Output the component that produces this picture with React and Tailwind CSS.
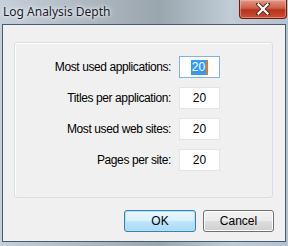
const rows = [
  { label: 'Most used applications:', value: '20', selected: true },
  { label: 'Titles per application:', value: '20' },
  { label: 'Most used web sites:', value: '20' },
  { label: 'Pages per site:', value: '20' },
];

function CloseButton() {
  return (
    <div className="mr-[1px] flex h-[19px] w-[48px] items-center justify-center self-start rounded-b-[4px] border border-t-0 border-[#6b1a10] bg-[linear-gradient(to_bottom,#e09a88_0%,#cc5f47_45%,#b8321b_55%,#cc5032_100%)] shadow-[inset_0_0_0_1px_rgba(255,200,190,0.45)]">
      <svg width="14" height="12" viewBox="0 0 14 12">
        <path d="M2 1 L12 11 M12 1 L2 11" stroke="#5a2a22" strokeWidth="4" strokeLinecap="square" />
        <path d="M2.5 1.5 L11.5 10.5 M11.5 1.5 L2.5 10.5" stroke="#ffffff" strokeWidth="2.2" strokeLinecap="square" />
      </svg>
    </div>
  );
}

function Field({ value, selected }) {
  return (
    <div
      className={`flex h-[22px] w-[41px] items-center justify-center border bg-white text-[12px] ${
        selected ? 'border-[#7eb4ea]' : 'border-[#e2e3ea]'
      }`}
    >
      {selected ? (
        <span className="flex items-center">
          <span className="bg-[#3399ff] px-[1px] leading-[15px] text-white">{value}</span>
          <span className="h-[15px] w-[2px] bg-[#e07a1f]" />
        </span>
      ) : (
        <span className="text-black">{value}</span>
      )}
    </div>
  );
}

export default function App() {
  return (
    <div className="flex h-[246px] w-[288px] flex-col bg-[linear-gradient(to_right,#c4d0da_0%,#aeb8c0_30%,#9aa6ae_55%,#c0ccd6_80%,#b3c2d0_100%)] font-['Liberation_Sans',sans-serif]">
      <div className="flex h-[24px] items-start justify-between">
        <span className="pl-[3px] pt-[3px] font-['Noto_Sans',sans-serif] text-[12px] text-[#1a1a2e] [text-shadow:0_0_6px_#ffffff,0_0_3px_#ffffff]">
          Log Analysis Depth
        </span>
        <CloseButton />
      </div>
      <div className="mx-[2px] mb-[4px] flex flex-1 flex-col border border-[#4b5b6b] bg-[#f0f0f0] pl-[11px] pr-[11px] pt-[17px]">
        <div className="flex h-[156px] w-[259px] flex-col gap-[9px] rounded-[3px] border border-[#d5dfe5] pt-[13px] shadow-[inset_1px_1px_0_#ffffff]">
          {rows.map((r) => (
            <div key={r.label} className="flex h-[22px] items-center justify-end gap-[8px] pr-[52px]">
              <span className="text-[12px] tracking-[-0.4px] text-black">{r.label}</span>
              <Field value={r.value} selected={r.selected} />
            </div>
          ))}
        </div>
        <div className="mt-[12px] flex justify-end gap-[7px]">
          <button className="h-[22px] w-[72px] rounded-[3px] border border-[#3c7fb1] bg-[linear-gradient(to_bottom,#eaf6fd_0%,#d9f0fc_50%,#bee6fd_51%,#a7d9f5_100%)] text-[12px] text-black shadow-[inset_0_0_0_1px_#b5e0f7]">
            OK
          </button>
          <button className="h-[22px] w-[71px] rounded-[3px] border border-[#707070] bg-[linear-gradient(to_bottom,#f2f2f2_0%,#ebebeb_50%,#dddddd_51%,#cfcfcf_100%)] text-[12px] text-black shadow-[inset_0_0_0_1px_#fcfcfc]">
            Cancel
          </button>
        </div>
      </div>
    </div>
  );
}
